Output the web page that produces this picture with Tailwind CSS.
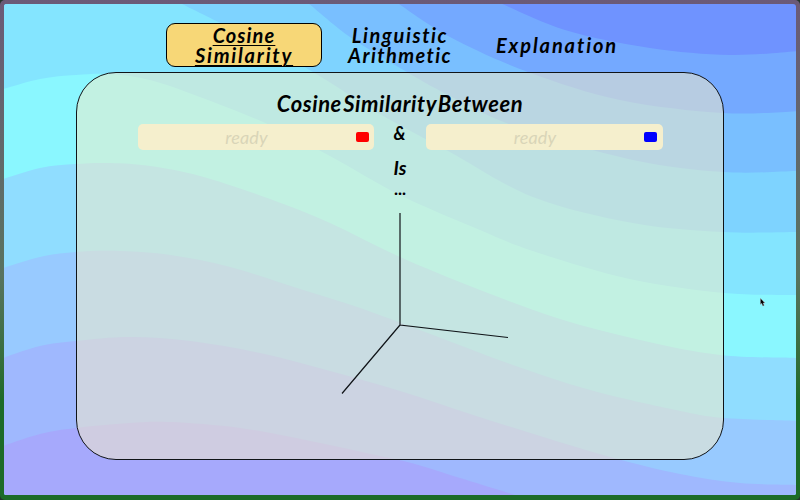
<!DOCTYPE html>
<html lang="en">
<head>
<meta charset="utf-8">
<title>Cosine Similarity</title>
<script src="https://cdn.jsdelivr.net/npm/@tailwindcss/browser@4"></script>
</head>
<body class="relative w-[800px] h-[500px] overflow-hidden bg-[#24352c] text-black font-['Lato',sans-serif] italic font-bold">
<div class="relative w-[800px] h-[500px] rounded-[5px] bg-linear-to-b from-[#6b5a78] via-[#58735f] via-55% to-[#1d6b28] to-80% px-[4px] pt-[4px] pb-[5px]">
<main class="relative h-[491px] rounded-[3px] overflow-hidden bg-[#6f93ff] flex flex-col items-center">
  <svg id="waves" class="absolute -left-1 -top-1" width="800" height="500" viewBox="0 0 800 500"></svg>
  <nav class="relative flex items-center mt-[19px] h-[44px] w-full pl-[162px] text-[20px] leading-[20px] text-center">
    <a class="flex flex-col items-center justify-center w-[156px] h-[44px] rounded-[9px] border-[1.5px] border-black bg-[#f7d777] underline decoration-1 underline-offset-2"><span class="tracking-[1.1px]">Cosine</span><span class="tracking-[1.8px]">Similarity</span></a>
    <a class="flex flex-col items-center justify-center w-[156px]"><span class="tracking-[1.6px]">Linguistic</span><span class="tracking-[1.4px]">Arithmetic</span></a>
    <a class="w-[158px] tracking-[1.9px]">Explanation</a>
  </nav>
  <section class="relative mt-[5px] w-[648px] h-[388px] rounded-[40px] border border-[#101418] bg-[#f5ebc8]/52 flex flex-col items-center">
    <h1 class="mt-[19px] h-[24px] leading-[24px] text-[22px] tracking-[0.55px] [word-spacing:-4px] whitespace-nowrap">Cosine Similarity Between</h1>
    <div class="flex items-start mt-[8px]">
      <div class="relative flex items-center justify-center w-[236px] h-[26px] rounded-[5px] bg-[#f5efcd] pr-[20px]">
        <span class="font-normal text-[18px] tracking-[0.1px] text-[#d9d5b8] translate-x-px">ready</span>
        <i class="absolute right-[5px] top-[8px] w-[13px] h-[10px] rounded-[2px] bg-[#ff0000]"></i>
      </div>
      <div class="w-[52px] text-center text-[18px] leading-[18px]">&amp;</div>
      <div class="relative flex items-center justify-center w-[237px] h-[26px] rounded-[5px] bg-[#f5efcd] pr-[20px]">
        <span class="font-normal text-[18px] tracking-[0.1px] text-[#d9d5b8] translate-x-px">ready</span>
        <i class="absolute right-[6px] top-[8px] w-[13px] h-[10px] rounded-[2px] bg-[#0000ff]"></i>
      </div>
    </div>
    <p class="mt-[7px] text-[19px] leading-[22px]">Is</p>
    <p class="-mt-px text-[17px] leading-[22px] not-italic">...</p>
    <svg class="mt-[12px]" width="180" height="190" viewBox="310 212 180 190" fill="none" stroke="#101418" stroke-width="1.2" overflow="visible"><path d="M400 213V325L508 337.5M400 325L342 393.5"/></svg>
  </section>
</main>
<svg class="absolute left-[760px] top-[298px]" width="6" height="9" viewBox="0 0 6 9"><path d="M.4.3V6.4L1.7 5.3 2.8 8 4.2 7.4 3.1 4.9H5Z" fill="#000" stroke="#c9b5ba" stroke-width=".4"/></svg>
</div>
<script>
const bands = [
 ['#74a9ff',[[500,3],[565,30],[650,48],[730,55],[800,51]]],
 ['#79bfff',[[396,2],[450,37],[528,72],[620,100],[723,113],[800,111]]],
 ['#7ed3ff',[[308,3],[350,37],[400,68],[450,96],[517,127],[633,160],[723,172],[800,171]]],
 ['#84e5ff',[[180,3],[250,38],[313,72],[380,114],[450,152],[533,197],[633,223],[723,232],[800,232]]],
 ['#8af7ff',[[0,90],[40,79],[76,75],[110,74],[150,80],[200,97],[270,125],[330,156],[400,195],[473,227],[533,251],[630,279],[725,293],[800,295]]],
 ['#90ddff',[[0,180],[40,168],[76,164],[110,163],[150,166],[200,176],[270,199],[330,223],[400,257],[480,290],[560,319],[640,340],[720,355],[800,358]]],
 ['#98caff',[[0,269],[40,257],[76,252],[120,251],[170,255],[230,267],[300,289],[360,308],[433,335],[510,364],[590,390],[680,411],[724,418],[800,421]]],
 ['#9fb8fe',[[0,359],[40,346],[76,341],[130,337],[190,341],[260,353],[330,371],[400,391],[470,414],[540,436],[610,457],[680,474],[740,483],[800,485]]],
 ['#a6a9fc',[[0,447],[40,434],[76,428],[130,423],[170,422],[240,428],[310,441],[380,456],[415,464],[460,478],[525,498]]]
];
const svg = document.getElementById('waves');
for (const [color, p] of bands) {
  let d = `M${p[0]}`;
  for (let i = 0; i < p.length - 1; i++) {
    const a = p[i - 1] || p[i], b = p[i], c = p[i + 1], e = p[i + 2] || c;
    d += `C${b[0] + (c[0] - a[0]) / 6} ${b[1] + (c[1] - a[1]) / 6} ${c[0] - (e[0] - b[0]) / 6} ${c[1] - (e[1] - b[1]) / 6} ${c}`;
  }
  d += `V500H0V${p[0][1]}Z`;
  const el = document.createElementNS('http://www.w3.org/2000/svg', 'path');
  el.setAttribute('d', d); el.setAttribute('fill', color);
  svg.appendChild(el);
}
</script>
</body>
</html>
